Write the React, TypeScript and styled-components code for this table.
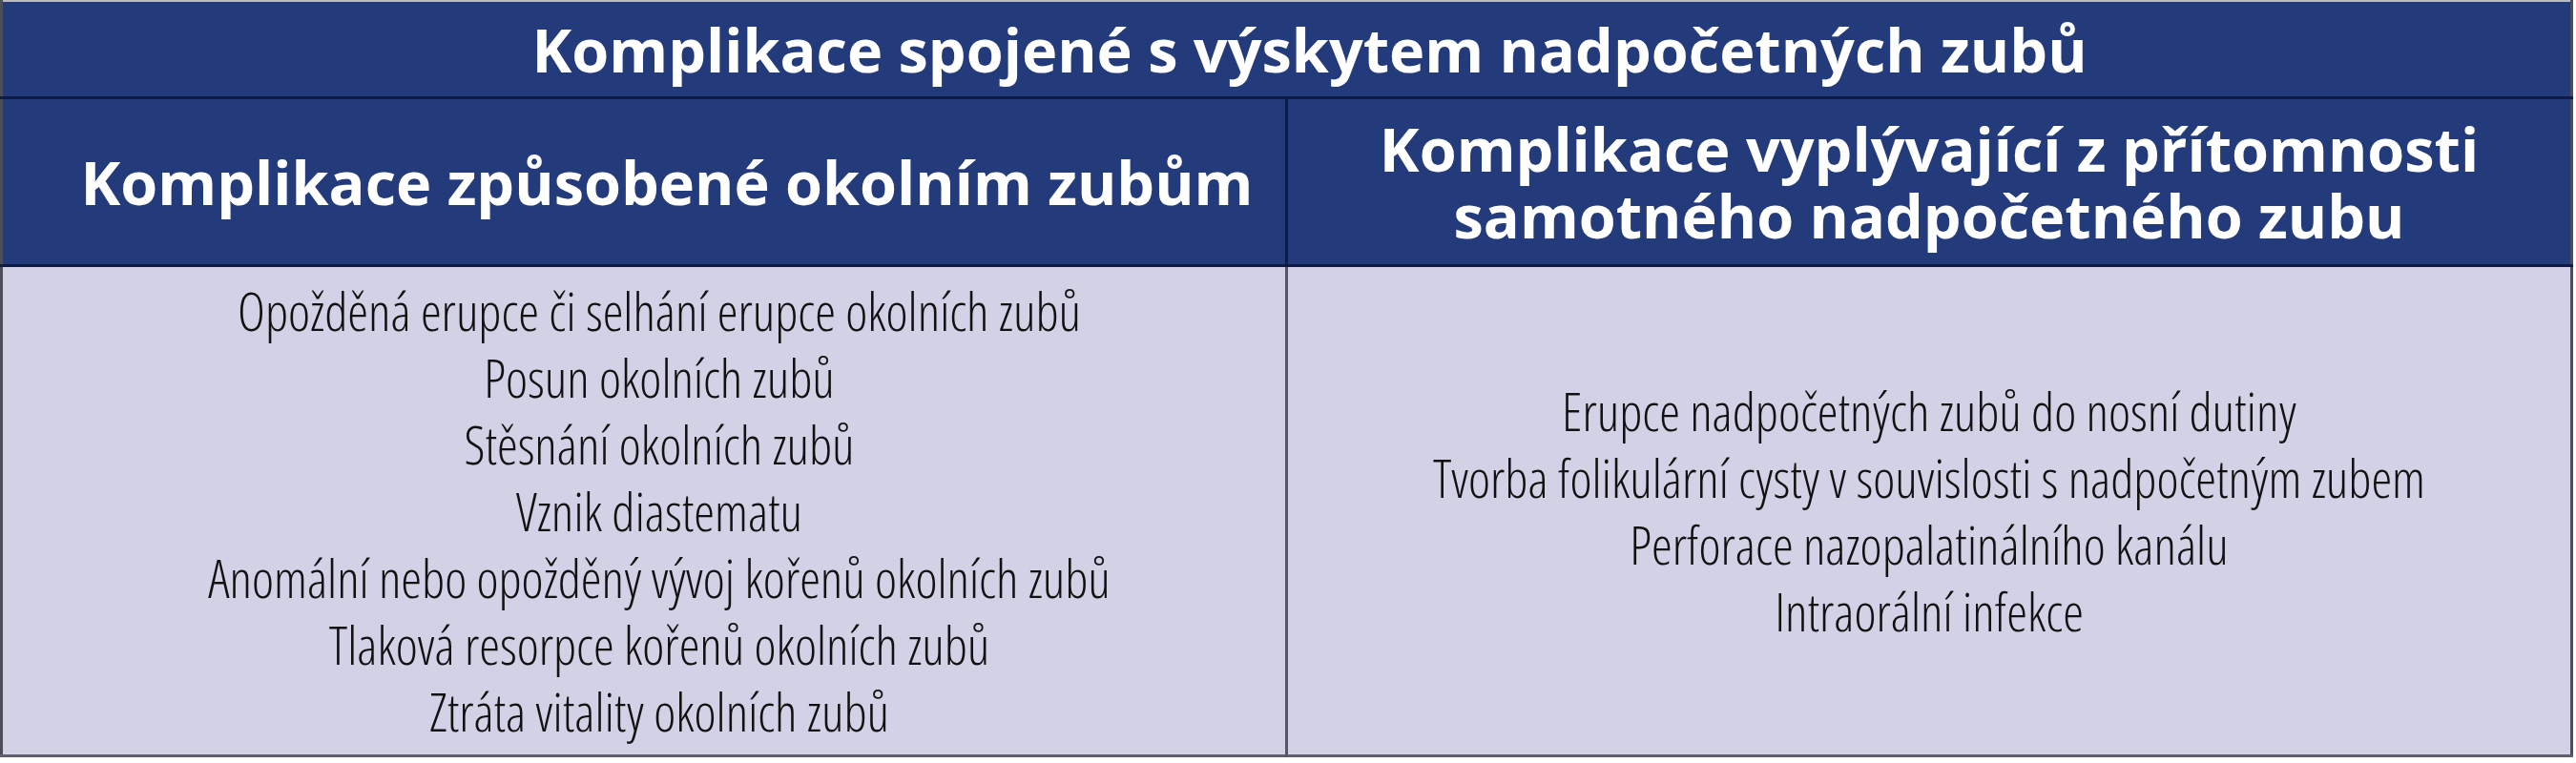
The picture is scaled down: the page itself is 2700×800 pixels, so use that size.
import styled, { createGlobalStyle } from "styled-components";

const GlobalStyle = createGlobalStyle`
  html, body {
    margin: 0;
    padding: 0;
    background: #ffffff;
  }
  body {
    font-family: "Open Sans", "Noto Sans", sans-serif;
  }
`;

const Table = styled.table`
  width: 2697px;
  height: 794px;
  border-collapse: collapse;
  table-layout: fixed;
  border-top: 2px solid #b9bac4;
  border-left: 3px solid #4c4d5a;
  border-right: 3px solid #4c4d5a;
  border-bottom: 3px solid #5f606c;
`;

const TitleCell = styled.th`
  height: 99px;
  padding: 0 0 0 48px;
  background: #243b7b;
  color: #ffffff;
  font-family: "Open Sans", sans-serif;
  font-weight: 700;
  font-size: 63px;
  line-height: 80px;
  text-align: center;
  vertical-align: middle;
  border-bottom: 3px solid #0e1c45;
`;

// first column sits a little right of centre in the original
const HeadCell = styled.th<{ $last?: boolean }>`
  height: 173px;
  padding: ${(p) => (p.$last ? "0 20px" : "0 10px 0 58px")};
  background: #243b7b;
  color: #ffffff;
  font-family: "Open Sans", sans-serif;
  font-weight: 700;
  font-size: 63px;
  line-height: 70px;
  text-align: center;
  vertical-align: middle;
  border-bottom: 3px solid #0e1c45;
  border-right: ${(p) => (p.$last ? "none" : "3px solid #0e1c45")};
`;

const BodyCell = styled.td<{ $last?: boolean }>`
  padding: ${(p) => (p.$last ? "0 20px" : "0 20px 0 52px")};
  background: #d2d1e5;
  color: #111111;
  text-align: center;
  vertical-align: middle;
  border-right: ${(p) => (p.$last ? "none" : "3px solid #55566a")};
`;

const ItemList = styled.ul`
  list-style: none;
  margin: 0;
  padding: 0;
`;

const Item = styled.li`
  font-family: "Open Sans", sans-serif;
  font-weight: 300;
  font-stretch: 75%;
  font-size: 55px;
  line-height: 70px;
`;

const left = [
  "Opožděná erupce či selhání erupce okolních zubů",
  "Posun okolních zubů",
  "Stěsnání okolních zubů",
  "Vznik diastematu",
  "Anomální nebo opožděný vývoj kořenů okolních zubů",
  "Tlaková resorpce kořenů okolních zubů",
  "Ztráta vitality okolních zubů",
];

const right = [
  "Erupce nadpočetných zubů do nosní dutiny",
  "Tvorba folikulární cysty v souvislosti s nadpočetným zubem",
  "Perforace nazopalatinálního kanálu",
  "Intraorální infekce",
];

function App() {
  return (
    <>
      <GlobalStyle />
      <Table>
        <thead>
          <tr>
            <TitleCell colSpan={2}>
              Komplikace spojené s výskytem nadpočetných zubů
            </TitleCell>
          </tr>
          <tr>
            <HeadCell>Komplikace způsobené okolním zubům</HeadCell>
            <HeadCell $last>
              Komplikace vyplývající z přítomnosti
              <br />
              samotného nadpočetného zubu
            </HeadCell>
          </tr>
        </thead>
        <tbody>
          <tr>
            <BodyCell>
              <ItemList>
                {left.map((t) => (
                  <Item key={t}>{t}</Item>
                ))}
              </ItemList>
            </BodyCell>
            <BodyCell $last>
              <ItemList>
                {right.map((t) => (
                  <Item key={t}>{t}</Item>
                ))}
              </ItemList>
            </BodyCell>
          </tr>
        </tbody>
      </Table>
    </>
  );
}

export default App;
